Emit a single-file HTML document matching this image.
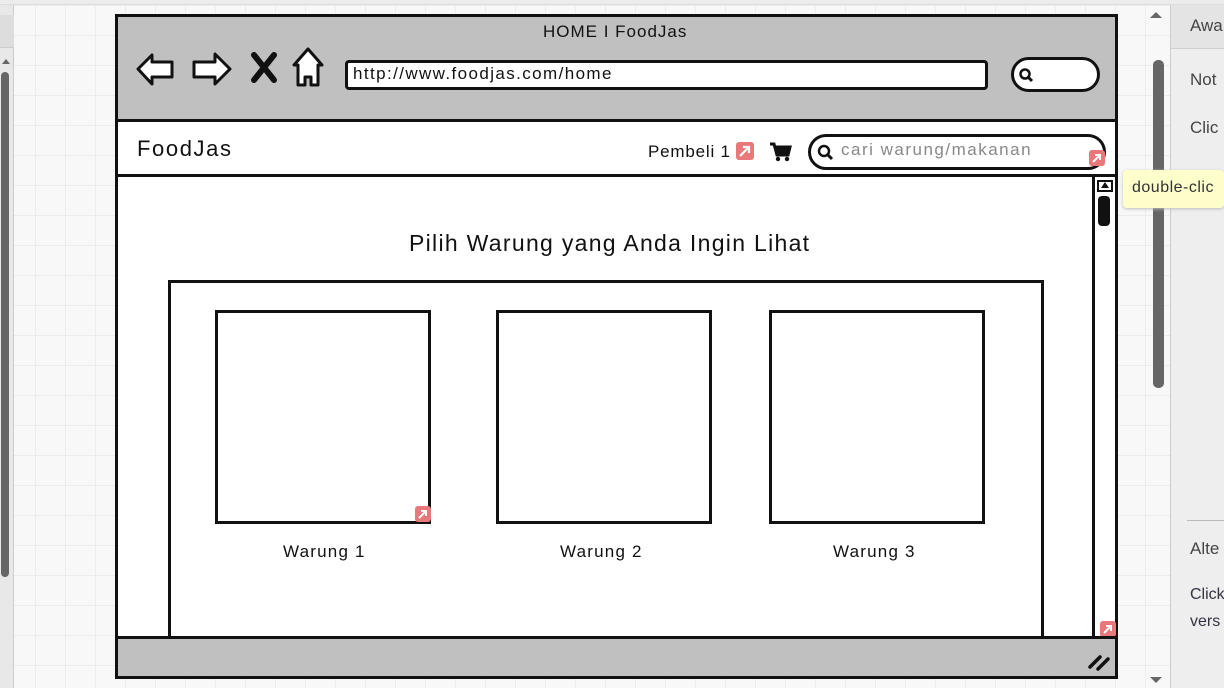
<!DOCTYPE html>
<html><head><meta charset="utf-8"><style>
*{margin:0;padding:0;box-sizing:border-box}
body{width:1224px;height:688px;overflow:hidden;position:relative;font-family:"Liberation Sans",sans-serif;
background-color:#f8f8f8;background-image:linear-gradient(#ececec 1px,transparent 1px),linear-gradient(90deg,#ececec 1px,transparent 1px);background-size:30px 30px;background-position:5px 5px}
.a{position:absolute}
.b{border:3px solid #111}
.t{color:#111;white-space:nowrap}
</style></head><body>
<div class="a" style="left:0;top:0;width:1224px;height:5px;background:#ececec;border-bottom:1px solid #ddd"></div>
<div class="a" style="left:0;top:5px;width:14px;height:683px;background:#e8e8e8;border-right:1px solid #ccc"></div>
<div class="a" style="left:0;top:15px;width:14px;height:33px;background:#ddd;border-bottom:1px solid #ccc"></div>
<div class="a" style="left:1px;top:72px;width:8px;height:505px;background:#666;border-radius:4px"></div>
<div class="a" style="left:2px;top:55px;width:0;height:0;border:4px solid transparent;border-bottom:5px solid #666"></div>
<div class="a" style="left:1150px;top:12px;border:6px solid transparent;border-bottom:6px solid #666;border-top:0"></div>
<div class="a" style="left:1153px;top:60px;width:11px;height:328px;background:#666;border-radius:5px"></div>
<div class="a" style="left:1150px;top:677px;border:6px solid transparent;border-top:6px solid #666;border-bottom:0"></div>
<div class="a" style="left:1170px;top:5px;width:54px;height:683px;background:#eeeeee;border-left:1px solid #ccc"></div>
<div class="a" style="left:1171px;top:5px;width:53px;height:44px;background:#e4e4e4;border-bottom:1px solid #d0d0d0"></div>
<div class="a t" style="left:1190px;top:16px;font-size:17px;color:#444">Awa</div>
<div class="a t" style="left:1190px;top:70px;font-size:17px;color:#444">Not</div>
<div class="a t" style="left:1190px;top:118px;font-size:17px;color:#444">Clic</div>
<div class="a" style="left:1187px;top:520px;width:37px;height:1px;background:#bbb"></div>
<div class="a t" style="left:1190px;top:539px;font-size:17px;color:#444">Alte</div>
<div class="a t" style="left:1190px;top:586px;font-size:16px;color:#334">Click</div>
<div class="a t" style="left:1190px;top:613px;font-size:16px;color:#334">vers</div>
<div class="a b" style="left:115px;top:14px;width:1003px;height:665px;background:#fff"></div>
<div class="a" style="left:118px;top:17px;width:997px;height:105px;background:#c0c0c0;border-bottom:3px solid #111"></div>
<div class="a t" style="left:543px;top:22px;font-size:17px;letter-spacing:1px">HOME I FoodJas</div>
<svg class="a" style="left:130px;top:45px" width="210" height="50" viewBox="0 0 210 50">
<g stroke="#111" stroke-width="3" fill="#fff" stroke-linejoin="round">
<path d="M8 24 L22 10 L22 17 L42 17 L42 32 L22 32 L22 39 Z"/>
<path d="M100 24 L85 9 L85 17 L64 17 L64 32 L85 32 L85 39 Z"/>
<path d="M178 4 L164 20 L168 20 L168 40 L175 40 L175 32 L181 32 L181 40 L188 40 L188 20 L192 20 Z"/>
</g>
<path d="M124 10 L144 35 M144 10 L124 35" stroke="#111" stroke-width="6" stroke-linecap="round"/>
</svg>
<div class="a" style="left:345px;top:60px;width:643px;height:30px;background:#fff;border:3px solid #111;border-radius:4px"></div>
<div class="a t" style="left:353px;top:64px;font-size:17px;letter-spacing:1.4px">http://www.foodjas.com/home</div>
<div class="a" style="left:1011px;top:57px;width:89px;height:35px;background:#fff;border:3px solid #111;border-radius:18px"></div>
<svg class="a" style="left:1017px;top:66px" width="18" height="18"><circle cx="8" cy="8" r="4.5" stroke="#111" stroke-width="2.5" fill="none"/><path d="M11 11 L15 15" stroke="#111" stroke-width="3"/></svg>
<div class="a" style="left:118px;top:174px;width:997px;height:3px;background:#111"></div>
<div class="a t" style="left:137px;top:136px;font-size:22px;letter-spacing:1.6px">FoodJas</div>
<div class="a t" style="left:648px;top:142px;font-size:17px;letter-spacing:.8px">Pembeli 1</div>
<svg class="a" style="left:736px;top:142px" width="18" height="18"><rect width="18" height="18" rx="3" fill="#e8787a"/><path d="M4 14 L13 5 M7 5 L13 5 L13 11" stroke="#fff" stroke-width="2.2" fill="none"/></svg>
<svg class="a" style="left:768px;top:141px" width="26" height="22"><path d="M2 3 L6 3 L9 14 L20 14 L22 6 L7 6" stroke="#111" stroke-width="3" fill="#111"/><circle cx="10" cy="18" r="2.2" fill="#111"/><circle cx="19" cy="18" r="2.2" fill="#111"/></svg>
<div class="a" style="left:808px;top:134px;width:298px;height:36px;background:#fff;border:3px solid #111;border-radius:18px"></div>
<svg class="a" style="left:815px;top:142px" width="20" height="20"><circle cx="9" cy="9" r="5" stroke="#111" stroke-width="2.5" fill="none"/><path d="M12.5 12.5 L17 17" stroke="#111" stroke-width="3"/></svg>
<div class="a t" style="left:841px;top:140px;font-size:17px;color:#888;letter-spacing:1.5px">cari warung/makanan</div>
<svg class="a" style="left:1089px;top:150px" width="16" height="16"><rect width="16" height="16" rx="3" fill="#e8787a"/><path d="M4 12 L11 5 M6 5 L11 5 L11 10" stroke="#fff" stroke-width="2" fill="none"/></svg>
<div class="a" style="left:1123px;top:170px;width:101px;height:38px;background:#ffffcc;border-radius:4px;box-shadow:0 1px 3px #bbb"></div>
<div class="a t" style="left:1132px;top:179px;font-size:16px;color:#333;letter-spacing:.5px">double-clic</div>
<div class="a" style="left:1092px;top:177px;width:3px;height:460px;background:#111"></div>
<div class="a" style="left:1097px;top:180px;width:16px;height:12px;border:2px solid #111;background:#fff"></div>
<div class="a" style="left:1101px;top:182px;border:4px solid transparent;border-bottom:6px solid #111;border-top:0"></div>
<div class="a" style="left:1098px;top:196px;width:12px;height:30px;background:#111;border-radius:4px"></div>
<svg class="a" style="left:1100px;top:621px" width="16" height="16"><rect width="16" height="16" rx="3" fill="#e8787a"/><path d="M4 12 L11 5 M6 5 L11 5 L11 10" stroke="#fff" stroke-width="2" fill="none"/></svg>
<div class="a t" style="left:409px;top:230px;font-size:23px;letter-spacing:1.3px">Pilih Warung yang Anda Ingin Lihat</div>
<div class="a" style="left:168px;top:280px;width:876px;height:360px;border:3px solid #111;border-bottom:0"></div>
<div class="a b" style="left:215px;top:310px;width:216px;height:214px"></div>
<svg class="a" style="left:415px;top:506px" width="16" height="16"><rect width="16" height="16" rx="3" fill="#e8787a"/><path d="M4 12 L11 5 M6 5 L11 5 L11 10" stroke="#fff" stroke-width="2" fill="none"/></svg>
<div class="a b" style="left:496px;top:310px;width:216px;height:214px"></div>
<div class="a b" style="left:769px;top:310px;width:216px;height:214px"></div>
<div class="a t" style="left:283px;top:542px;font-size:17px;letter-spacing:1.2px">Warung 1</div>
<div class="a t" style="left:560px;top:542px;font-size:17px;letter-spacing:1.2px">Warung 2</div>
<div class="a t" style="left:833px;top:542px;font-size:17px;letter-spacing:1.2px">Warung 3</div>
<div class="a" style="left:118px;top:636px;width:997px;height:40px;background:#c0c0c0;border-top:3px solid #111"></div>
<svg class="a" style="left:1087px;top:650px" width="26" height="22"><path d="M3 17 L13 7 M11 19 L21 9" stroke="#111" stroke-width="3.5" stroke-linecap="round"/></svg>
</body></html>
